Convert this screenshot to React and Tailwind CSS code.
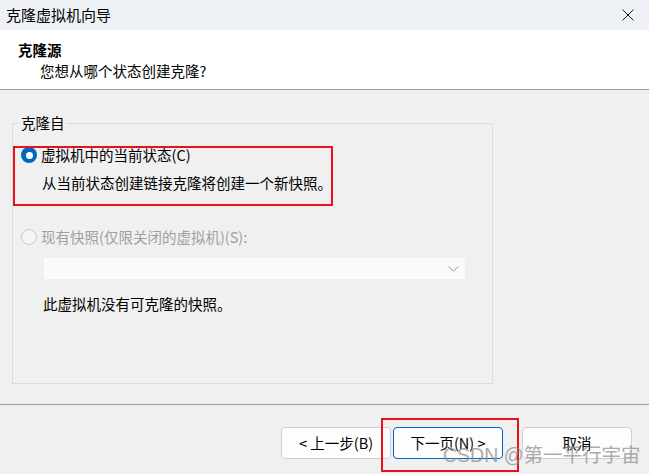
import React from 'react';

const font = { fontFamily: '"Noto Sans CJK SC", "Noto Sans", sans-serif' };

function Radio({ checked, disabled }) {
  if (checked) {
    return (
      <span className="w-[16px] h-[16px] rounded-full bg-[#0067c0] flex items-center justify-center shrink-0">
        <span className="w-[7px] h-[7px] rounded-full bg-white" />
      </span>
    );
  }
  return (
    <span
      className={`w-[16px] h-[16px] rounded-full border shrink-0 ${
        disabled ? 'border-[#c8c8c8] bg-[#f5f5f5]' : 'border-[#5a5a5a] bg-white'
      }`}
    />
  );
}

function Button({ children, primary }) {
  return (
    <button
      className={`w-[110px] h-[32px] rounded-[4px] bg-[#fdfdfd] text-[14.5px] text-black flex items-center justify-center ${
        primary ? 'border border-[#0067c0]' : 'border border-[#d0d0d0]'
      }`}
    >
      {children}
    </button>
  );
}

export default function App() {
  return (
    <div className="relative w-[649px] h-[474px] overflow-hidden bg-[#f0f0f0] flex flex-col text-black" style={font}>
      {/* Title bar */}
      <div className="h-[30px] bg-[#eef2f6] flex items-center justify-between pl-[6px] pr-[15px] shrink-0">
        <span className="text-[15px] leading-[20px]">克隆虚拟机向导</span>
        <svg width="12" height="12" viewBox="0 0 12 12">
          <path d="M0.5 0.5 L11.5 11.5 M11.5 0.5 L0.5 11.5" stroke="#1a1a1a" strokeWidth="1" />
        </svg>
      </div>

      {/* Header */}
      <div className="h-[60px] bg-white border-b border-[#a0a0a0] shrink-0 pl-[18px] pt-[10px]">
        <div className="text-[14.5px] leading-[20px] font-bold">克隆源</div>
        <div className="text-[14.5px] leading-[20px] pl-[22px] pt-[1px]">您想从哪个状态创建克隆?</div>
      </div>

      {/* Content */}
      <div className="h-[314px] shrink-0 pt-[33px] pl-[12px]">
        <div className="relative w-[481px] h-[261px] border border-[#dcdcdc] pt-[21px] pl-[8px]">
          <span className="absolute left-[6px] -top-[11px] px-[2px] bg-[#f0f0f0] text-[14.5px] leading-[20px]">克隆自</span>

          <div className="h-[20px] flex items-center gap-[4px]">
            <Radio checked />
            <span className="text-[14.5px] leading-[20px]">虚拟机中的当前状态(C)</span>
          </div>
          <div className="mt-[8px] pl-[21px] text-[14.5px] leading-[20px]">从当前状态创建链接克隆将创建一个新快照。</div>

          <div className="mt-[34px] h-[20px] flex items-center gap-[4px]">
            <Radio disabled />
            <span className="text-[14.5px] leading-[20px] text-[#a0a0a0]">现有快照(仅限关闭的虚拟机)(S):</span>
          </div>

          <div className="mt-[10px] ml-[22px] w-[423px] h-[23px] bg-[#fafafa] border border-[#f0f0f0] flex items-center justify-end pr-[6px]">
            <svg width="11" height="6" viewBox="0 0 11 6">
              <path d="M0.5 0.5 L5.5 5 L10.5 0.5" fill="none" stroke="#9a9a9a" strokeWidth="1" />
            </svg>
          </div>

          <div className="mt-[14px] ml-[22px] text-[14.5px] leading-[20px]">此虚拟机没有可克隆的快照。</div>
        </div>
      </div>

      {/* Footer */}
      <div className="flex-1 border-t border-[#a0a0a0] flex items-start justify-end pt-[22px] pr-[17px]">
        <div className="flex">
          <Button>&lt; 上一步(B)</Button>
          <div className="ml-[2px]">
            <Button primary>下一页(N) &gt;</Button>
          </div>
          <div className="ml-[19px]">
            <Button>取消</Button>
          </div>
        </div>
      </div>

      {/* annotations */}
      <div className="absolute left-[13px] top-[146px] w-[320px] h-[60px] border-2 border-[#e8121e]" />
      <div className="absolute left-[381px] top-[418px] w-[138px] h-[54px] border-2 border-[#e8121e]" />

      {/* watermark */}
      <div
        className="absolute left-[443px] top-[442px] text-[19.5px] leading-[26px] text-[#909090] opacity-75 whitespace-nowrap"
        style={{ fontFamily: '"Liberation Sans", "Noto Sans CJK SC", sans-serif' }}
      >
        CSDN @第一平行宇宙
      </div>
    </div>
  );
}
